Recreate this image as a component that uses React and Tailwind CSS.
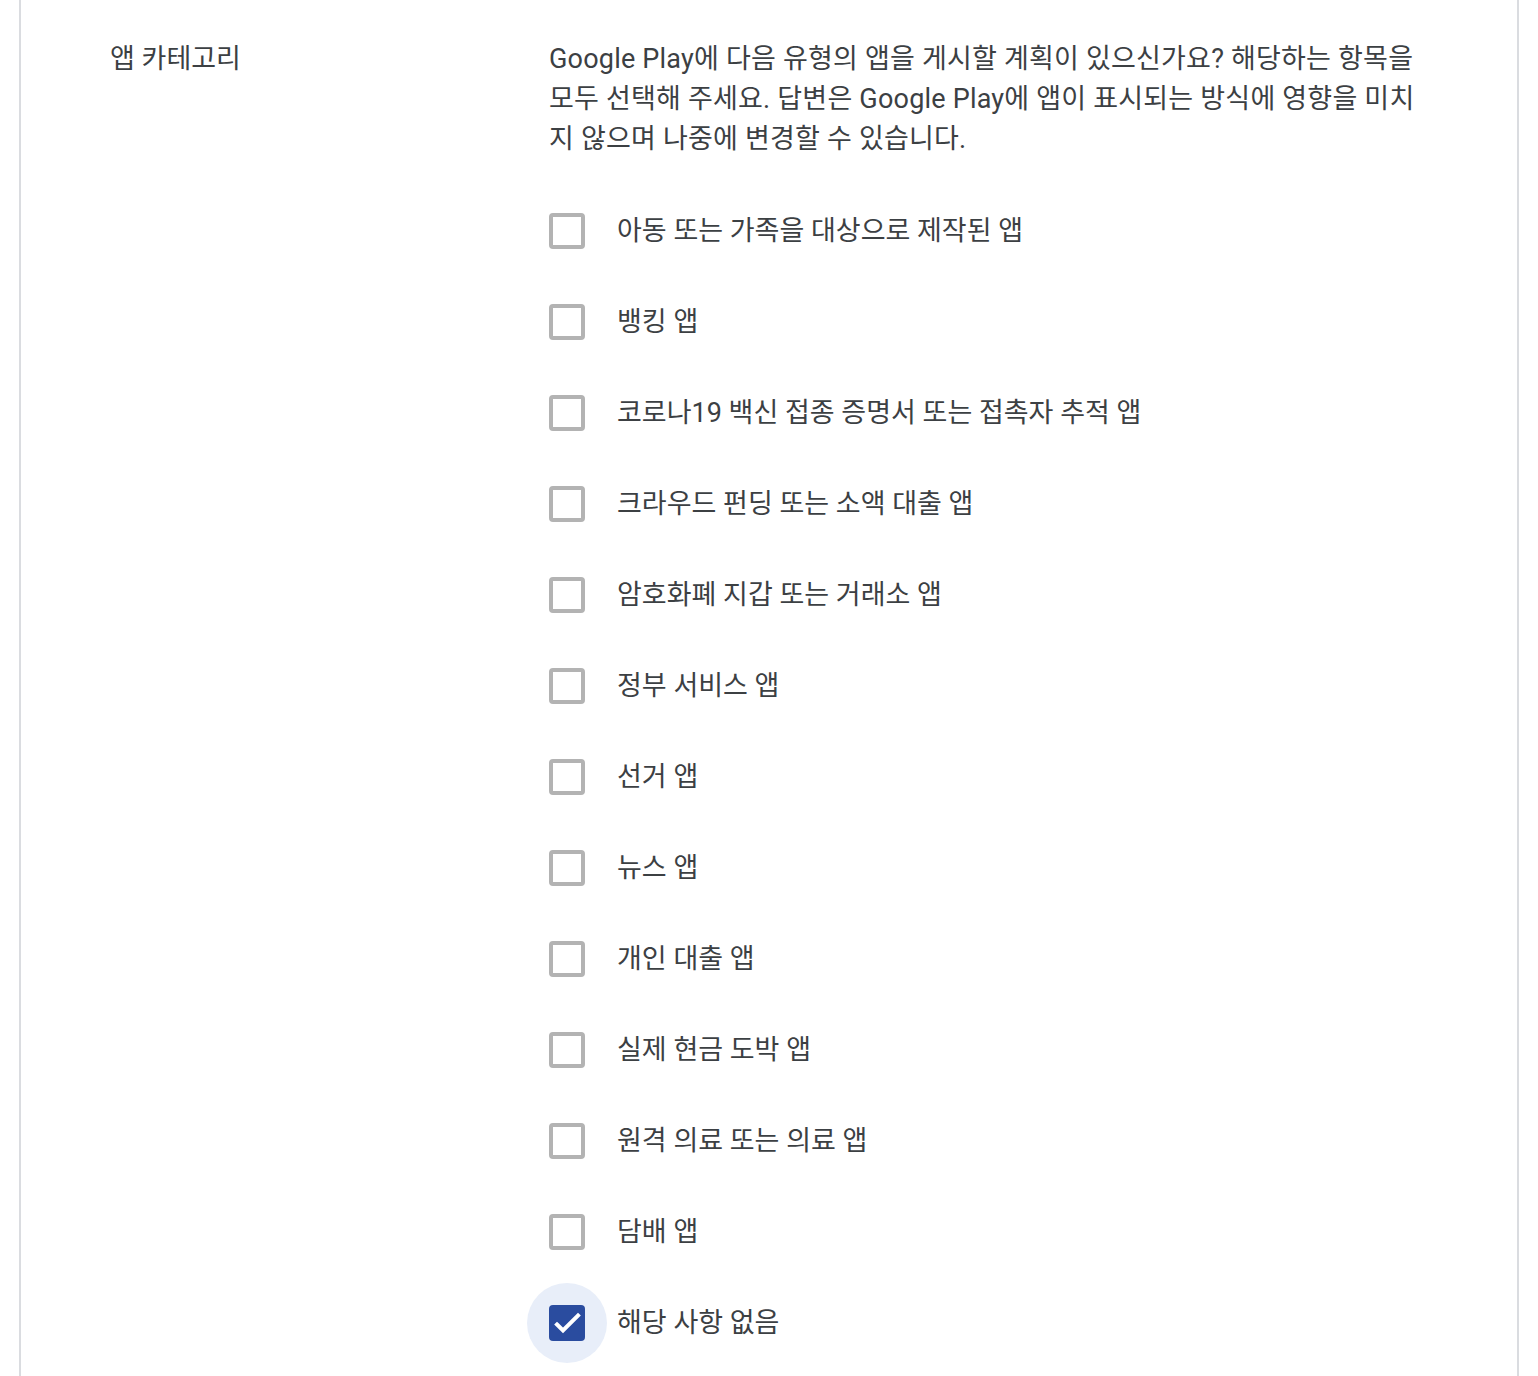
import React, { useState } from "react";

const categories = [
  "아동 또는 가족을 대상으로 제작된 앱",
  "뱅킹 앱",
  "코로나19 백신 접종 증명서 또는 접촉자 추적 앱",
  "크라우드 펀딩 또는 소액 대출 앱",
  "암호화폐 지갑 또는 거래소 앱",
  "정부 서비스 앱",
  "선거 앱",
  "뉴스 앱",
  "개인 대출 앱",
  "실제 현금 도박 앱",
  "원격 의료 또는 의료 앱",
  "담배 앱",
  "해당 사항 없음",
];

const Checkbox = ({ checked, onClick }) => (
  <button
    type="button"
    onClick={onClick}
    className="relative w-9 h-9 flex-shrink-0 flex items-center justify-center"
  >
    {checked && (
      <span className="absolute -left-[22px] -top-[22px] w-[80px] h-[80px] rounded-full bg-[#e8eef9]" />
    )}
    {checked ? (
      <span className="relative w-9 h-9 rounded-[4px] bg-[#2a4c9f] flex items-center justify-center">
        <svg width="36" height="36" viewBox="0 0 36 36" fill="none">
          <path
            d="M8 19.5l6 6 15-15"
            stroke="white"
            strokeWidth="4"
            strokeLinecap="square"
          />
        </svg>
      </span>
    ) : (
      <span className="relative w-9 h-9 rounded-[4px] border-[4px] border-[#b3b3b3] bg-white" />
    )}
  </button>
);

const App = () => {
  const [checked, setChecked] = useState({ 12: true });

  return (
    <div className="min-h-screen bg-white font-['Roboto','Noto_Sans_CJK_KR',sans-serif] text-[#3c4043]">
      <div className="mx-[19px] h-[1376px] border-x-2 border-[#dadce0] overflow-hidden">
        <div className="flex pt-[39px]">
          {/* Label column */}
          <div className="w-[528px] pl-[89px] flex-shrink-0 text-[27px] leading-[40px]">
            앱 카테고리
          </div>

          {/* Content column */}
          <div className="flex-1">
            <p className="text-[27px] leading-[40px] tracking-[0.2px] whitespace-nowrap">
              Google Play에 다음 유형의 앱을 게시할 계획이 있으신가요? 해당하는 항목을
              <br />
              모두 선택해 주세요. 답변은 Google Play에 앱이 표시되는 방식에 영향을 미치
              <br />
              지 않으며 나중에 변경할 수 있습니다.
            </p>

            <div className="mt-[26px] flex flex-col">
              {categories.map((label, i) => (
                <div key={label} className="h-[91px] flex items-center gap-8">
                  <Checkbox
                    checked={!!checked[i]}
                    onClick={() => setChecked({ ...checked, [i]: !checked[i] })}
                  />
                  <span className="text-[27px] leading-[40px]">{label}</span>
                </div>
              ))}
            </div>
          </div>
        </div>
      </div>
    </div>
  );
};

export default App;
